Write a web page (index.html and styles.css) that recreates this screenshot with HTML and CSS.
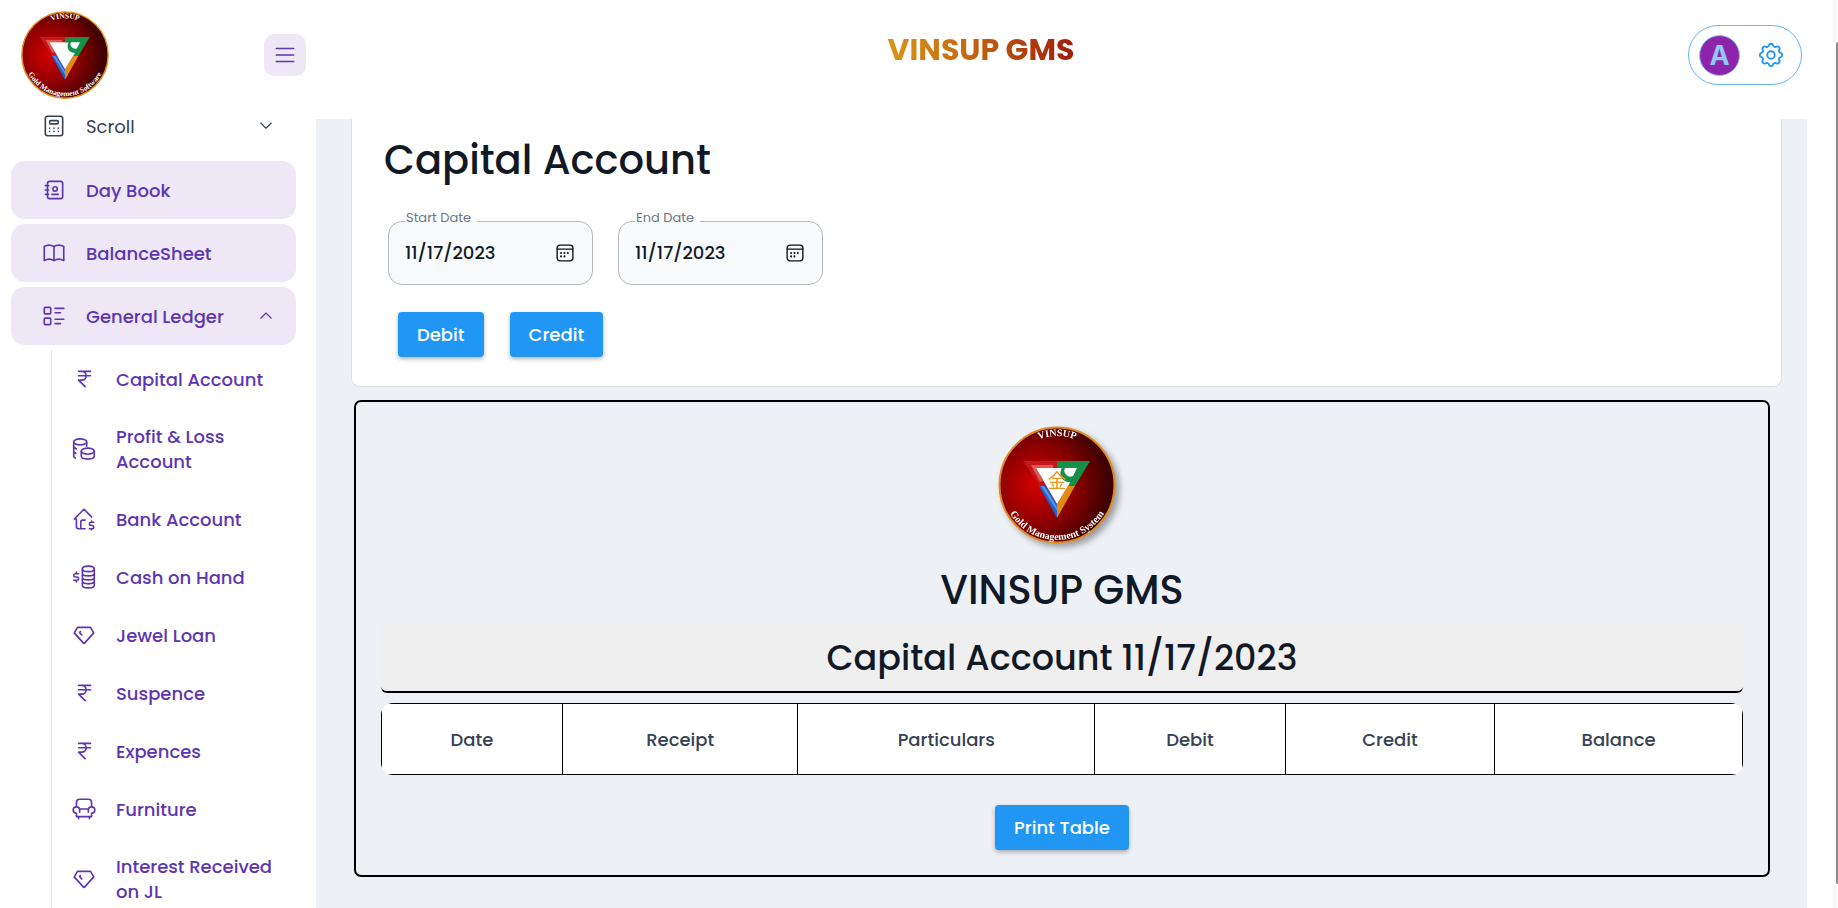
FILE: index.html
```html
<!DOCTYPE html>
<html lang="en">
<head>
<meta charset="utf-8">
<title>VINSUP GMS</title>
<link rel="stylesheet" href="styles.css">
</head>
<body>
<svg class="defs" aria-hidden="true">
  <defs>
    <radialGradient id="disc" cx="32%" cy="50%" r="72%">
      <stop offset="0" stop-color="#d40000"/>
      <stop offset="0.45" stop-color="#8f0000"/>
      <stop offset="0.85" stop-color="#420000"/>
      <stop offset="1" stop-color="#350000"/>
    </radialGradient>
    <path id="arc-top" d="M11 60a49 49 0 0 1 98 0"/>
    <path id="arc-bottom" d="M5 60a55 55 0 0 0 110 0"/>
    <symbol id="emblem" viewBox="0 0 120 120">
      <circle cx="60" cy="60" r="57.500" fill="url(#disc)" stroke="#e08a1e" stroke-width="2"/>
      <path fill="#c4161c" d="M26 36h34v8H39l10 17H43z"/>
      <path fill="#e2574c" d="M34 40h22v3H39l7 13-3 1z"/>
      <path fill="#15904a" d="M60 36h33L78 61H68l5-9z"/>
      <path fill="#1f62c9" d="M42 61h7l11 18v14z"/>
      <path fill="#5a93e4" d="M44 61h3l13 21v4z"/>
      <path fill="#e08c10" d="M60 79l11-18h7L60 93z"/>
      <path fill="#fff" d="M39 43h43L60 79z"/>
      <path fill="#15904a" d="M60 36h26v7l-9 15-6-1a9 9 0 0 1-6-14h-5z"/>
      <path fill="#fff" d="M68 43h12l-4 8a6 6 0 0 1-8-8z"/>
    </symbol>
    <symbol id="rupee" viewBox="0 0 24 24"><path d="M18 5H7h3a4 4 0 0 1 0 8H7l6 6M7 9h11"/></symbol>
    <symbol id="diamond" viewBox="0 0 24 24"><path d="M6 5h12l3 5l-8.500 9.500a.7 .7 0 0 1 -1 0L3 10zM10 12l-2-2.200l.6-1"/></symbol>
    <symbol id="calendar" viewBox="0 0 16 16"><rect x="1" y="1" width="14" height="14" rx="2.500"/><path d="M1 4.500h14"/><path class="dots" d="M7.500 8h.01M10.500 8h.01M4.500 8h.01M7.500 11h.01M4.500 11h.01"/></symbol>
  </defs>
</svg>

<div class="app">
  <aside class="sidebar">
    <div class="brand">
      <svg class="brand-logo" viewBox="0 0 120 120" role="img" aria-label="VINSUP Gold Management Software">
        <use href="#emblem"/>
        <text class="seal"><textPath href="#arc-top" startOffset="50%" text-anchor="middle">VINSUP</textPath></text>
        <text class="seal"><textPath href="#arc-bottom" startOffset="50%" text-anchor="middle">Gold Management Software</textPath></text>
      </svg>
      <button class="menu-toggle" aria-label="Toggle menu">
        <svg class="icon" viewBox="0 0 24 24"><path d="M4 6h16M4 12h16M4 18h16"/></svg>
      </button>
    </div>
    <nav class="nav">
      <a class="item plain" href="#">
        <svg class="icon" viewBox="0 0 24 24"><rect x="4" y="3" width="16" height="18" rx="2"/><rect x="8" y="7" width="8" height="3" rx="1"/><path d="M8 14v.01M12 14v.01M16 14v.01M8 17v.01M12 17v.01M16 17v.01"/></svg>
        <span>Scroll</span>
        <svg class="chevron" viewBox="0 0 24 24"><path d="M5 8l7 7l7-7"/></svg>
      </a>
      <a class="item" href="#">
        <svg class="icon" viewBox="0 0 24 24"><path d="M20 6v12a2 2 0 0 1-2 2H8a2 2 0 0 1-2-2V6a2 2 0 0 1 2-2h10a2 2 0 0 1 2 2zM10 16h6M4 8h3M4 12h3M4 16h3"/><circle cx="13" cy="11" r="2"/></svg>
        <span>Day Book</span>
      </a>
      <a class="item" href="#">
        <svg class="icon" viewBox="0 0 24 24"><path d="M3 19a9 9 0 0 1 9 0a9 9 0 0 1 9 0M3 6a9 9 0 0 1 9 0a9 9 0 0 1 9 0M3 6v13M12 6v13M21 6v13"/></svg>
        <span>BalanceSheet</span>
      </a>
      <a class="item" href="#">
        <svg class="icon" viewBox="0 0 24 24"><path d="M13 5h8M13 9h5M13 15h8M13 19h5"/><rect x="3" y="4" width="6" height="6" rx="1"/><rect x="3" y="14" width="6" height="6" rx="1"/></svg>
        <span>General Ledger</span>
        <svg class="chevron" viewBox="0 0 24 24"><path d="M5 15l7-7l7 7"/></svg>
      </a>
      <div class="subnav">
        <a class="subitem" href="#"><svg class="icon"><use href="#rupee"/></svg><span>Capital Account</span></a>
        <a class="subitem" href="#">
          <svg class="icon" viewBox="0 0 24 24"><ellipse cx="8.500" cy="5.500" rx="6" ry="2.800"/><path d="M2.500 5.500v13.500l1.500 1.500M14.500 5.500v4M2.500 10l2.500 2M2.500 14.500l2 1.500"/><ellipse cx="15.500" cy="14" rx="6" ry="2.800"/><path d="M9.500 14v4.500c0 1.600 2.700 2.800 6 2.800s6-1.200 6-2.800V14"/></svg>
          <span>Profit &amp; Loss Account</span>
        </a>
        <a class="subitem" href="#">
          <svg class="icon" viewBox="0 0 24 24"><path d="M19 10l-7-7l-9 9h2v7a2 2 0 0 0 2 2h6M9 21v-6a2 2 0 0 1 2-2h2M21 15h-2.500a1.500 1.500 0 0 0 0 3h1a1.500 1.500 0 0 1 0 3H17M19 21v1M19 14v1"/></svg>
          <span>Bank Account</span>
        </a>
        <a class="subitem" href="#">
          <svg class="icon" viewBox="0 0 24 24"><ellipse cx="16" cy="4.500" rx="5.500" ry="2.500"/><path d="M10.500 4.500v15c0 1.400 2.500 2.500 5.500 2.500s5.500-1.100 5.500-2.500v-15M10.500 8.500c0 1.400 2.500 2.500 5.500 2.500s5.500-1.100 5.500-2.500M10.500 12.200c0 1.400 2.500 2.500 5.500 2.500s5.500-1.100 5.500-2.500M10.500 15.800c0 1.400 2.500 2.500 5.500 2.500s5.500-1.100 5.500-2.500M7 9H4a1.500 1.500 0 0 0 0 3h1.500a1.500 1.500 0 0 1 0 3H2.500M5 15v1.500M5 7.500V9"/></svg>
          <span>Cash on Hand</span>
        </a>
        <a class="subitem" href="#"><svg class="icon"><use href="#diamond"/></svg><span>Jewel Loan</span></a>
        <a class="subitem" href="#"><svg class="icon"><use href="#rupee"/></svg><span>Suspence</span></a>
        <a class="subitem" href="#"><svg class="icon"><use href="#rupee"/></svg><span>Expences</span></a>
        <a class="subitem" href="#">
          <svg class="icon" viewBox="0 0 24 24"><path d="M5 10V6a3 3 0 0 1 3-3h8a3 3 0 0 1 3 3v4M16 15v-2a3 3 0 1 1 3 3v3H5v-3a3 3 0 1 1 3-3v2M8 12h8M7 19v2M17 19v2"/></svg>
          <span>Furniture</span>
        </a>
        <a class="subitem" href="#"><svg class="icon"><use href="#diamond"/></svg><span>Interest Received on JL</span></a>
      </div>
    </nav>
  </aside>

  <div class="page">
    <header class="topbar">
      <div class="app-title"><span>VINSUP GMS</span></div>
      <button class="account" aria-label="Account settings">
        <span class="avatar">A</span>
        <svg class="gear" viewBox="0 0 24 24"><path d="M10.325 4.317c.426-1.756 2.924-1.756 3.350 0a1.724 1.724 0 0 0 2.573 1.066c1.543-.94 3.310 .826 2.370 2.370a1.724 1.724 0 0 0 1.065 2.572c1.756 .426 1.756 2.924 0 3.350a1.724 1.724 0 0 0-1.066 2.573c.94 1.543-.826 3.310-2.370 2.370a1.724 1.724 0 0 0-2.572 1.065c-.426 1.756-2.924 1.756-3.350 0a1.724 1.724 0 0 0-2.573-1.066c-1.543 .94-3.310-.826-2.370-2.370a1.724 1.724 0 0 0-1.065-2.572c-1.756-.426-1.756-2.924 0-3.350a1.724 1.724 0 0 0 1.066-2.573c-.94-1.543 .826-3.310 2.370-2.370c1 .608 2.296 .07 2.572-1.065z"/><circle cx="12" cy="12" r="3"/></svg>
      </button>
    </header>

    <main class="content">
      <section class="filters">
        <h1>Capital Account</h1>
        <div class="dates">
          <fieldset class="date-field">
            <legend><label for="start">Start Date</label></legend>
            <input id="start" type="text" value="11/17/2023">
            <button aria-label="Choose start date"><svg class="calendar"><use href="#calendar"/></svg></button>
          </fieldset>
          <fieldset class="date-field">
            <legend><label for="end">End Date</label></legend>
            <input id="end" type="text" value="11/17/2023">
            <button aria-label="Choose end date"><svg class="calendar"><use href="#calendar"/></svg></button>
          </fieldset>
        </div>
        <div class="actions">
          <button class="btn">Debit</button>
          <button class="btn">Credit</button>
        </div>
      </section>

      <section class="report">
        <svg class="report-logo" viewBox="0 0 120 120" role="img" aria-label="VINSUP Gold Management System">
          <use href="#emblem"/>
          <text class="seal"><textPath href="#arc-top" startOffset="50%" text-anchor="middle">VINSUP</textPath></text>
          <text class="seal"><textPath href="#arc-bottom" startOffset="50%" text-anchor="middle">Gold Management System</textPath></text>
          <text class="kanji" x="60" y="63" text-anchor="middle">金</text>
        </svg>
        <h2>VINSUP GMS</h2>
        <h3>Capital Account 11/17/2023</h3>
        <div class="table-wrap">
          <table>
            <colgroup><col class="c-date"><col class="c-receipt"><col class="c-part"><col class="c-debit"><col class="c-credit"><col></colgroup>
            <thead>
              <tr><th>Date</th><th>Receipt</th><th>Particulars</th><th>Debit</th><th>Credit</th><th>Balance</th></tr>
            </thead>
          </table>
        </div>
        <button class="btn">Print Table</button>
      </section>
    </main>
  </div>
</div>
<div class="scrollbar" aria-hidden="true"><div class="thumb"></div></div>
</body>
</html>
```

FILE: styles.css
```css
* { box-sizing: border-box; }

body {
  margin: 0;
  background: #fff;
  color: #121926;
  font-family: Poppins, Inter, "Liberation Sans", sans-serif;
  font-size: 18px;
  line-height: 25px;
}

button { font: inherit; cursor: pointer; }
h1, h2, h3 { margin: 0; font-weight: 500; }

.defs { position: absolute; width: 0; height: 0; }

.app {
  display: grid;
  grid-template-columns: 316px 1fr;
  height: 100vh;
  overflow: hidden;
}

/* Sidebar */
.sidebar { overflow: hidden; }

.brand {
  display: flex;
  align-items: center;
  justify-content: space-between;
  height: 97px;
  padding: 13px 10px 0 20px;
}
.brand-logo { width: 90px; height: 90px; }
.brand-logo .seal { font-size: 10px; }

.menu-toggle {
  display: flex;
  align-items: center;
  justify-content: center;
  width: 42px;
  height: 42px;
  padding: 0;
  border: 0;
  border-radius: 10px;
  background: #ede7f6;
  color: #5e35b1;
}

.icon, .chevron, .gear, .calendar {
  flex: none;
  fill: none;
  stroke: currentColor;
  stroke-width: 1.500;
  stroke-linecap: round;
  stroke-linejoin: round;
}
.icon { width: 26px; height: 26px; }
.chevron { width: 18px; height: 18px; margin-left: auto; }

.nav {
  display: flex;
  flex-direction: column;
  gap: 5px;
  padding: 0 20px 0 11px;
}

.item {
  display: flex;
  flex: none;
  align-items: center;
  gap: 19px;
  height: 58px;
  padding: 0 21px 0 30px;
  border-radius: 14px;
  background: #ede7f6;
  color: #5e35b1;
  font-weight: 500;
  text-decoration: none;
}
.item.plain { margin-bottom: 1px; background: none; color: #364152; font-weight: 400; }

.subnav {
  margin-left: 40px;
  border-left: 1px solid #e3e8ef;
}
.subitem {
  display: flex;
  align-items: center;
  gap: 19px;
  padding: 16px 0 16px 19px;
  color: #5e35b1;
  font-weight: 500;
  text-decoration: none;
}

/* Top bar */
.page {
  display: flex;
  flex-direction: column;
  min-width: 0;
}
.topbar {
  display: flex;
  flex: none;
  align-items: flex-start;
  height: 119px;
  padding: 25px 36px 0 0;
}
.app-title {
  flex: 1;
  padding-right: 42px;
  font-size: 30px;
  font-weight: 700;
  line-height: 50px;
  text-align: center;
}
.app-title span {
  background: linear-gradient(90deg, #d8951a, #c86a10 40%, #a01c08);
  background-clip: text;
  color: transparent;
}
.account {
  display: flex;
  align-items: center;
  justify-content: space-between;
  width: 114px;
  height: 60px;
  padding: 0 15px 0 10px;
  border: 1px solid #64b5f6;
  border-radius: 30px;
  background: #fff;
}
.avatar {
  width: 41px;
  height: 41px;
  border: 1px solid #90caf9;
  border-radius: 50%;
  background: #8e24aa;
  color: #90caf9;
  font-family: Inter, sans-serif;
  font-size: 27px;
  font-weight: 700;
  line-height: 39px;
}
.gear { width: 30px; height: 30px; color: #2196f3; }

/* Content */
.content {
  flex: 1;
  margin-right: 31px;
  padding: 0 25px 32px 35px;
  background: #edf1f6;
}

.filters {
  padding: 12px 36px 29px;
  border: 1px solid #dbe1e8;
  border-top: 0;
  border-radius: 0 0 9px 9px;
  background: #fff;
}
h1 { margin-left: -4px; font-size: 40px; line-height: 58px; }

.dates { display: flex; gap: 25px; margin-top: 19px; }
.date-field {
  display: flex;
  align-items: center;
  width: 205px;
  min-width: 0;
  height: 77px;
  margin: 0;
  padding: 0 18px 13px 16px;
  border: 1px solid #b7bbc0;
  border-radius: 14px;
  background: #f8fafc;
}
.date-field legend {
  padding: 0 6px 6px 1px;
  color: #697586;
  font-size: 13px;
  line-height: 20px;
}
.date-field input {
  flex: 1;
  min-width: 0;
  padding: 0;
  border: 0;
  outline: 0;
  background: none;
  color: #121926;
  font: inherit;
  font-weight: 500;
}
.date-field button {
  display: flex;
  padding: 0;
  border: 0;
  background: none;
  color: #111;
}
.calendar { width: 18px; height: 18px; stroke-width: 1.200; }
.dots { stroke-width: 1.800; }

.actions { display: flex; gap: 26px; margin: 27px 0 0 10px; }
.btn {
  height: 45px;
  padding: 0 19px;
  border: 0;
  border-radius: 4px;
  background: #2196f3;
  box-shadow: 0 2px 4px rgba(0, 0, 0, 0.300);
  color: #fff;
  font-weight: 500;
}

.report {
  display: flex;
  flex-direction: column;
  align-items: center;
  margin: 13px 12px 0 3px;
  padding: 23px 25px 25px;
  border: 2px solid #000;
  border-radius: 7px;
}
.report-logo {
  width: 120px;
  height: 120px;
  border-radius: 50%;
  margin-right: 10px;
  filter: drop-shadow(4px 4px 3px rgba(0, 0, 0, 0.350));
}
.seal {
  fill: #fff;
  font-family: "Liberation Serif", serif;
  font-size: 10px;
  font-weight: 700;
}
.kanji {
  fill: #e8961e;
  font-family: "Noto Sans CJK JP", sans-serif;
  font-size: 19px;
}
h2 { margin: 17px 0 6px; font-size: 40px; line-height: 56px; }
h3 {
  width: 100%;
  border-bottom: 2px solid #000;
  border-radius: 6px;
  background: #efefef;
  font-size: 35px;
  line-height: 67px;
  text-align: center;
}
.table-wrap {
  width: 100%;
  margin: 10px 0 30px;
  overflow: hidden;
  border-radius: 12px;
  background: #fff;
}
table {
  width: 100%;
  border-collapse: collapse;
  table-layout: fixed;
}
th {
  height: 71px;
  padding: 0;
  border: 1px solid #000;
  color: #364152;
  font-weight: 500;
}
.c-date { width: 13.300%; }
.c-receipt { width: 17.300%; }
.c-part { width: 21.800%; }
.c-debit { width: 14%; }
.c-credit { width: 15.400%; }

/* Page scrollbar */
.scrollbar {
  position: fixed;
  top: 0;
  right: 0;
  bottom: 0;
  width: 5px;
  padding: 42px 0 24px 3px;
  background: #fafafa;
}
.thumb { height: 100%; border-radius: 2px 0 0 2px; background: #8a8a8a; }
```
